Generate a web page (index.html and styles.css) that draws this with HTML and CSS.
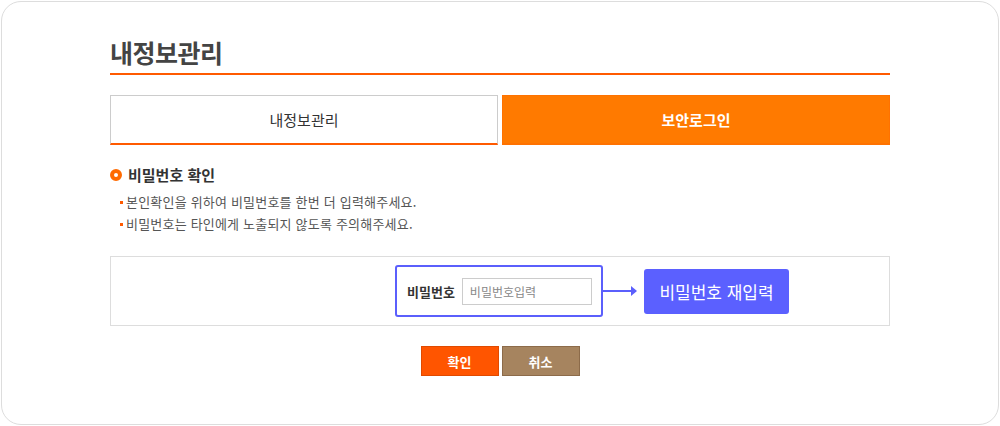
FILE: index.html
```html
<!DOCTYPE html>
<html lang="ko">
<head>
    <meta charset="UTF-8">
    <title>내정보관리</title>
    <link rel="stylesheet" href="styles.css">
</head>
<body>
<div class="frame">
    <div class="content">
        <h2 class="page-title">내정보관리</h2>

        <div class="tabs">
            <a href="#" class="tab">내정보관리</a>
            <a href="#" class="tab active">보안로그인</a>
        </div>

        <h3 class="sub-title"><span class="dot"></span>비밀번호 확인</h3>
        <ul class="notice">
            <li>본인확인을 위하여 비밀번호를 한번 더 입력해주세요.</li>
            <li>비밀번호는 타인에게 노출되지 않도록 주의해주세요.</li>
        </ul>

        <div class="pw-box">
            <div class="pw-field">
                <label for="pw">비밀번호</label>
                <input type="password" id="pw" placeholder="비밀번호입력">
                <!-- annotation -->
                <span class="pw-arrow"></span>
                <span class="pw-tip">비밀번호 재입력</span>
            </div>
        </div>

        <div class="btns">
            <button type="button" class="btn ok">확인</button>
            <button type="button" class="btn cancel">취소</button>
        </div>
    </div>
</div>
</body>
</html>
```

FILE: styles.css
```css
body {
    margin: 0;
    font-family: "Noto Sans CJK KR", "Noto Sans", sans-serif;
    background: #fff;
}

/* Frame */
.frame {
    box-sizing: border-box;
    width: 998px;
    height: 424px;
    margin: 1px;
    padding-top: 33px;
    border: 1px solid #ddd;
    border-radius: 20px;
}

.content {
    width: 780px;
    margin: 0 auto;
}

/* Title */
.page-title {
    margin: 0;
    padding-bottom: 4px;
    font-size: 25px;
    line-height: 34px;
    font-weight: bold;
    color: #444;
    border-bottom: 2px solid #ff5a00;
    letter-spacing: -0.5px;
}

/* Tabs */
.tabs {
    display: flex;
    gap: 4px;
    margin-top: 20px;
}

.tab {
    flex: 1;
    box-sizing: border-box;
    height: 50px;
    line-height: 47px;
    text-align: center;
    font-size: 15px;
    color: #333;
    text-decoration: none;
    border: 1px solid #ccc;
    border-bottom: 2px solid #ff5a00;
}

.tab.active {
    background-color: #ff7a00;
    border-color: #ff7200;
    color: #fff;
    font-weight: bold;
}

/* Sub title */
.sub-title {
    display: flex;
    align-items: center;
    margin: 19px 0 0;
    font-size: 15px;
    line-height: 22px;
    color: #333;
}

.dot {
    box-sizing: border-box;
    width: 12px;
    height: 12px;
    margin-right: 6px;
    border: 4px solid #ff6a00;
    border-radius: 50%;
    background: #fff;
}

/* Notice */
.notice {
    margin: 5px 0 0;
    padding: 0 0 0 10px;
    list-style: none;
}

.notice li {
    position: relative;
    padding-left: 6px;
    font-size: 13px;
    line-height: 22px;
    color: #555;
    letter-spacing: 0.2px;
}

.notice li:before {
    content: "";
    position: absolute;
    left: 0;
    top: 10px;
    width: 3px;
    height: 3px;
    background: #ff5a00;
}

/* Password box */
.pw-box {
    box-sizing: border-box;
    display: flex;
    justify-content: center;
    align-items: center;
    height: 70px;
    margin-top: 21px;
    border: 1px solid #ddd;
}

.pw-field {
    position: relative;
    box-sizing: border-box;
    display: flex;
    align-items: center;
    width: 208px;
    height: 52px;
    margin-right: 2px;
    padding-left: 10px;
    border: 2px solid #5b5ffc;
    border-radius: 3px;
}

.pw-field label {
    font-size: 13px;
    font-weight: bold;
    color: #333;
    margin-right: 7px;
}

.pw-field input {
    box-sizing: border-box;
    width: 130px;
    height: 27px;
    padding: 0 7px;
    border: 1px solid #ccc;
    font-family: inherit;
    font-size: 12px;
    outline: none;
}

.pw-field input::placeholder {
    color: #888;
}

.pw-arrow {
    position: absolute;
    left: 206px;
    top: 23px;
    width: 32px;
    height: 2px;
    background: #5b5ffc;
}

.pw-arrow:after {
    content: "";
    position: absolute;
    right: -2px;
    top: -4px;
    border-left: 6px solid #5b5ffc;
    border-top: 5px solid transparent;
    border-bottom: 5px solid transparent;
}

.pw-tip {
    position: absolute;
    left: 247px;
    top: 2px;
    width: 145px;
    height: 45px;
    line-height: 45px;
    text-align: center;
    font-size: 17px;
    color: #fff;
    background: #5b60ff;
    border-radius: 3px;
}

/* Buttons */
.btns {
    display: flex;
    justify-content: center;
    gap: 3px;
    margin-top: 20px;
}

.btn {
    box-sizing: border-box;
    width: 78px;
    height: 30px;
    font-family: inherit;
    font-size: 13px;
    font-weight: bold;
    color: #fff;
    cursor: pointer;
}

.btn.ok {
    background-color: #ff5500;
    border: 1px solid #e04a00;
}

.btn.cancel {
    background-color: #a6845f;
    border: 1px solid #8c6b4a;
}
```
